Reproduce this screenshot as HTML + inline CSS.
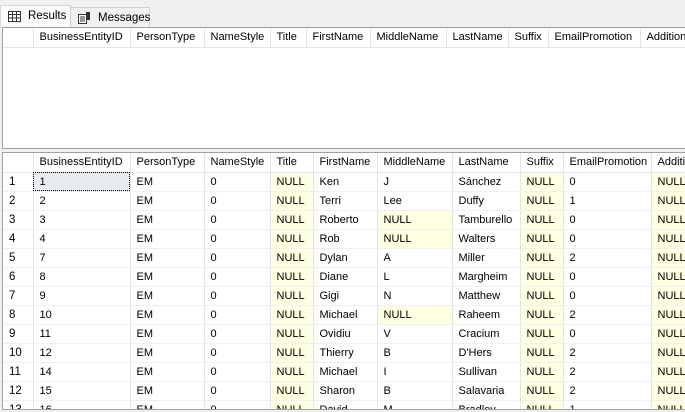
<!DOCTYPE html>
<html><head><style>
body{margin:0;width:685px;height:412px;background:#f0f0f0;overflow:hidden;position:relative;font-family:"Liberation Sans",Arial,sans-serif;font-size:11px;color:#000}
.tab{position:absolute;height:21px;line-height:21px;font-size:11.5px}
.panel{position:absolute;left:2px;background:#fff;border:1px solid #a0a0a0;overflow:hidden}
table{border-collapse:collapse;table-layout:fixed;position:absolute;left:0;top:0}
td{height:19px;padding:0 0 0 6px;border-right:1px solid #e4e4e4;border-bottom:1px solid #f0f0f0;white-space:nowrap;overflow:hidden;line-height:18px;box-sizing:border-box}
tr.h td{height:19px;border-bottom:1px solid #e4e4e4}
td.n{background:#ffffe1}
td.r{padding-left:6px;font-size:11.5px}
td.sel{background:#e8ecf0;outline:1px dotted #000;outline-offset:-1px}
</style></head><body>
<div class="tab" style="left:0;top:5px;width:69px;background:#fafafa;border:1px solid #d8d8d8;border-bottom:none;height:22px">
<svg style="position:absolute;left:7px;top:5px" width="13" height="11"><rect x=".5" y=".5" width="12" height="10" fill="#fff" stroke="#333"/><path d="M.5 3.5h12M.5 7h12M4.5 .5v10M8.5 .5v10" stroke="#333"/></svg>
<span style="position:absolute;left:27px;top:0">Results</span></div>
<div class="tab" style="left:70px;top:7px;width:78px;background:#f0f0f0;border:1px solid #d0d0d0;border-bottom:none;height:20px">
<svg style="position:absolute;left:6px;top:3px" width="14" height="14"><rect x="1.5" y="3.5" width="8" height="9" fill="#fff" stroke="#333"/><path d="M3 6h5M3 8h5M3 10h5" stroke="#333"/><rect x="9" y="1" width="4" height="8" fill="#333"/></svg>
<span style="position:absolute;left:27px;top:0">Messages</span></div>

<div class="panel" style="top:27px;width:690px;height:120px">
<table style="width:697px"><colgroup><col style="width:30px"><col style="width:97px"><col style="width:74px"><col style="width:66px"><col style="width:36px"><col style="width:64px"><col style="width:76px"><col style="width:62px"><col style="width:40px"><col style="width:92px"><col style="width:60px"></colgroup>
<tr class="h"><td></td><td>BusinessEntityID</td><td>PersonType</td><td>NameStyle</td><td>Title</td><td>FirstName</td><td>MiddleName</td><td>LastName</td><td>Suffix</td><td>EmailPromotion</td><td>Additional</td></tr></table>
</div>

<div class="panel" style="top:152px;width:690px;height:256px">
<table style="width:708px"><colgroup><col style="width:30px"><col style="width:97px"><col style="width:74px"><col style="width:66px"><col style="width:43px"><col style="width:64px"><col style="width:75px"><col style="width:68px"><col style="width:43px"><col style="width:88px"><col style="width:60px"></colgroup>
<tr class="h"><td></td><td>BusinessEntityID</td><td>PersonType</td><td>NameStyle</td><td>Title</td><td>FirstName</td><td>MiddleName</td><td>LastName</td><td>Suffix</td><td>EmailPromotion</td><td>Additional</td></tr>
<tr><td class="r">1</td><td class="sel">1</td><td>EM</td><td>0</td><td class="n">NULL</td><td>Ken</td><td>J</td><td>Sánchez</td><td class="n">NULL</td><td>0</td><td class="n">NULL</td></tr>
<tr><td class="r">2</td><td>2</td><td>EM</td><td>0</td><td class="n">NULL</td><td>Terri</td><td>Lee</td><td>Duffy</td><td class="n">NULL</td><td>1</td><td class="n">NULL</td></tr>
<tr><td class="r">3</td><td>3</td><td>EM</td><td>0</td><td class="n">NULL</td><td>Roberto</td><td class="n">NULL</td><td>Tamburello</td><td class="n">NULL</td><td>0</td><td class="n">NULL</td></tr>
<tr><td class="r">4</td><td>4</td><td>EM</td><td>0</td><td class="n">NULL</td><td>Rob</td><td class="n">NULL</td><td>Walters</td><td class="n">NULL</td><td>0</td><td class="n">NULL</td></tr>
<tr><td class="r">5</td><td>7</td><td>EM</td><td>0</td><td class="n">NULL</td><td>Dylan</td><td>A</td><td>Miller</td><td class="n">NULL</td><td>2</td><td class="n">NULL</td></tr>
<tr><td class="r">6</td><td>8</td><td>EM</td><td>0</td><td class="n">NULL</td><td>Diane</td><td>L</td><td>Margheim</td><td class="n">NULL</td><td>0</td><td class="n">NULL</td></tr>
<tr><td class="r">7</td><td>9</td><td>EM</td><td>0</td><td class="n">NULL</td><td>Gigi</td><td>N</td><td>Matthew</td><td class="n">NULL</td><td>0</td><td class="n">NULL</td></tr>
<tr><td class="r">8</td><td>10</td><td>EM</td><td>0</td><td class="n">NULL</td><td>Michael</td><td class="n">NULL</td><td>Raheem</td><td class="n">NULL</td><td>2</td><td class="n">NULL</td></tr>
<tr><td class="r">9</td><td>11</td><td>EM</td><td>0</td><td class="n">NULL</td><td>Ovidiu</td><td>V</td><td>Cracium</td><td class="n">NULL</td><td>0</td><td class="n">NULL</td></tr>
<tr><td class="r">10</td><td>12</td><td>EM</td><td>0</td><td class="n">NULL</td><td>Thierry</td><td>B</td><td>D'Hers</td><td class="n">NULL</td><td>2</td><td class="n">NULL</td></tr>
<tr><td class="r">11</td><td>14</td><td>EM</td><td>0</td><td class="n">NULL</td><td>Michael</td><td>I</td><td>Sullivan</td><td class="n">NULL</td><td>2</td><td class="n">NULL</td></tr>
<tr><td class="r">12</td><td>15</td><td>EM</td><td>0</td><td class="n">NULL</td><td>Sharon</td><td>B</td><td>Salavaria</td><td class="n">NULL</td><td>2</td><td class="n">NULL</td></tr>
<tr><td class="r">13</td><td>16</td><td>EM</td><td>0</td><td class="n">NULL</td><td>David</td><td>M</td><td>Bradley</td><td class="n">NULL</td><td>1</td><td class="n">NULL</td></tr>
</table>
</div>
</body></html>
